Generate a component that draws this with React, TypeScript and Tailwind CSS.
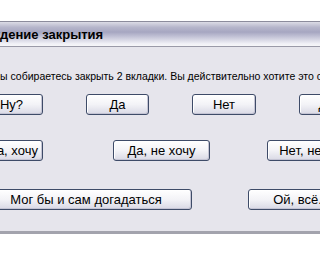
import React from "react";

function Btn({ w, className = "", children }: { w: string; className?: string; children: React.ReactNode }) {
  return (
    <div
      className={`${w} ${className} h-[21px] shrink-0 flex items-center justify-center whitespace-nowrap rounded-[3px] border border-[#3e4b68] bg-linear-to-b from-[#ffffff] via-[#f3f3f7] to-[#d9d9e5] shadow-[inset_-1px_-1px_0_#c4c4d4,inset_1px_1px_0_#ffffff] text-[13px] text-black leading-none`}
    >
      {children}
    </div>
  );
}

export default function App() {
  return (
    <div className="w-[320px] h-[260px] bg-white overflow-hidden font-['Liberation_Sans',Arial,sans-serif]">
      <div className="mt-[21px] -ml-[100px] w-[540px] flex flex-col">
        <div className="h-[26px] border-t border-b border-t-[#8c8c9c] border-b-[#9a9aa8] bg-[linear-gradient(to_bottom,#dcdce6_0%,#b6b6cb_22%,#a6a6c1_42%,#c4c4d7_62%,#f0f0f6_90%,#f6f6f9_100%)] flex items-center">
          <div className="whitespace-nowrap text-[13px] font-bold text-black leading-none">
            <span className="inline-block w-[100px] text-right">Подтверж</span>дение закрытия
          </div>
        </div>
        <div className="bg-[#e6e5ec] border-b-[3px] border-[#a3a3ad] pt-[22px] pb-[21px] flex flex-col">
          <div className="whitespace-nowrap text-[10.5px] leading-[14px] text-black">
            <span className="inline-block w-[100px] text-right">В</span>ы собираетесь закрыть 2 вкладки. Вы действительно хотите это сделать?
          </div>
          <div className="mt-[11px] flex pl-[80px] gap-[43px]">
            <Btn w="w-[63px]">Ну?</Btn>
            <Btn w="w-[63px]">Да</Btn>
            <Btn w="w-[64px]">Нет</Btn>
            <Btn w="w-[63px]">Дык</Btn>
          </div>
          <div className="mt-[25px] flex pl-[83px]">
            <Btn w="w-[60px]">Да, хочу</Btn>
            <Btn w="w-[97px]" className="ml-[70px]">Да, не хочу</Btn>
            <Btn w="w-[97px]" className="ml-[57px]">Нет, не хочу</Btn>
          </div>
          <div className="mt-[28px] flex pl-[80px] gap-[56px]">
            <Btn w="w-[212px]">Мог бы и сам догадаться</Btn>
            <Btn w="w-[212px]">Ой, всё. Делай что хочешь</Btn>
          </div>
        </div>
      </div>
    </div>
  );
}
